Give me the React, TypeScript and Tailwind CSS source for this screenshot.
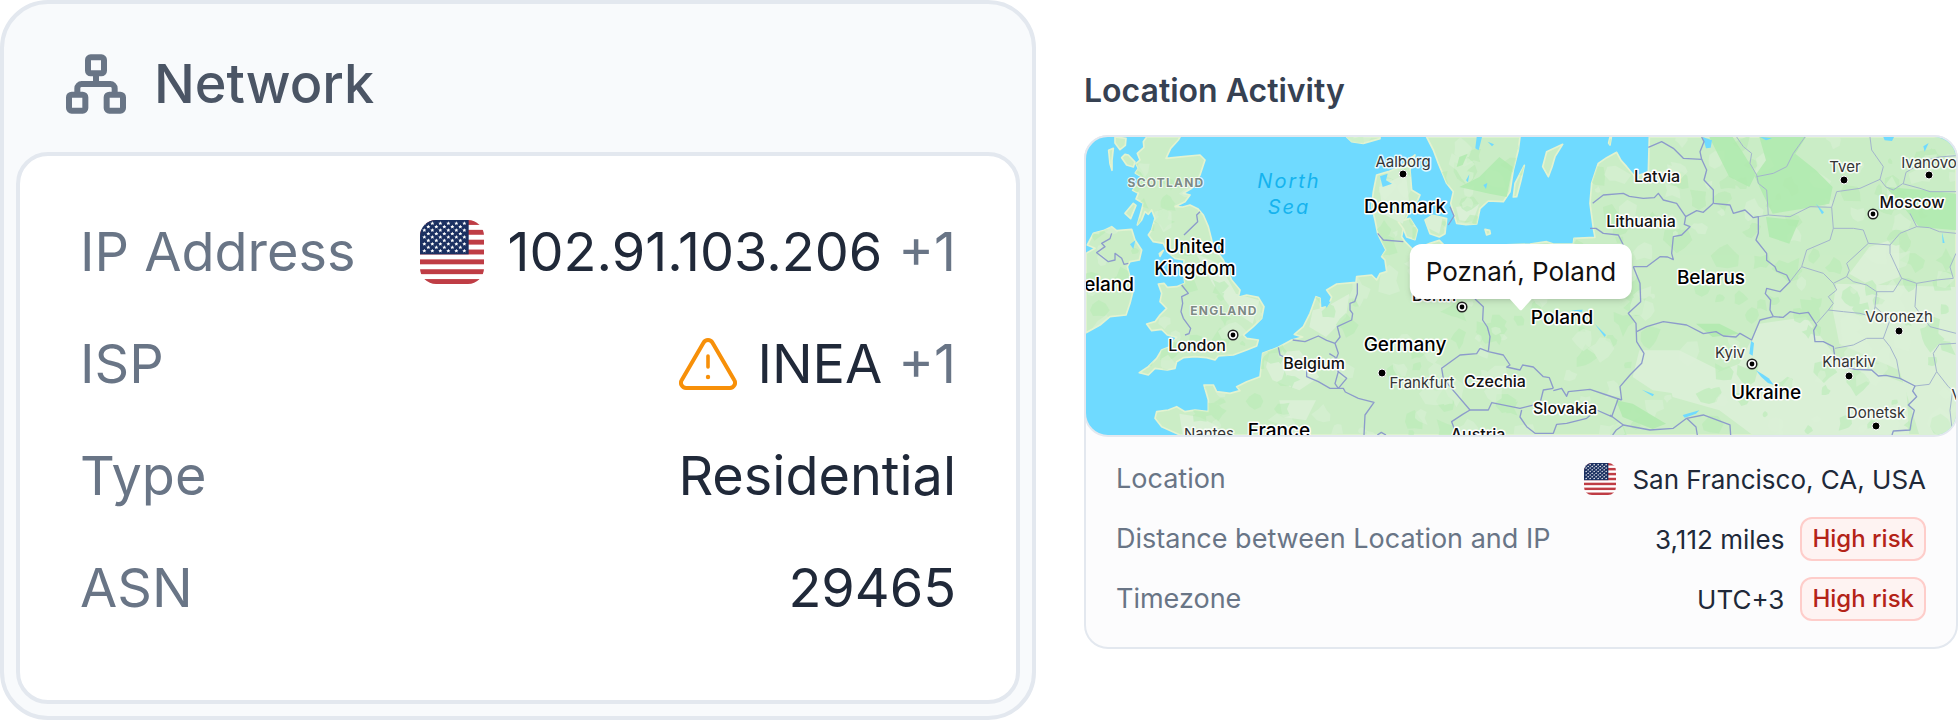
import type { ReactNode } from 'react';

interface RowProps {
  label: string;
  children: ReactNode;
}

interface MapLabel {
  text: string;
  x: number;
  y: number;
  kind: keyof typeof labelStyles;
}

const labelStyles = {
  country: 'fill-black text-[19px] font-medium stroke-white stroke-[3px]',
  small: 'fill-[#111] text-[16px] font-medium stroke-white stroke-[3px]',
  city: 'fill-[#333] text-[15px] stroke-white/80 stroke-[3px]',
  region: 'fill-[#7d8a85] text-[12px] font-bold tracking-widest stroke-white/80 stroke-[2px]',
  sea: 'fill-[#15b3ee] text-[20px] italic tracking-widest stroke-none',
};

const labels: MapLabel[] = [
  { text: 'SCOTLAND', x: 80, y: 50, kind: 'region' },
  { text: 'ENGLAND', x: 138, y: 178, kind: 'region' },
  { text: 'North', x: 203, y: 51, kind: 'sea' },
  { text: 'Sea', x: 203, y: 77, kind: 'sea' },
  { text: 'United', x: 109, y: 116, kind: 'country' },
  { text: 'Kingdom', x: 109, y: 138, kind: 'country' },
  { text: 'Ireland', x: 17, y: 154, kind: 'country' },
  { text: 'London', x: 111, y: 214, kind: 'small' },
  { text: 'Aalborg', x: 317, y: 30, kind: 'city' },
  { text: 'Denmark', x: 319, y: 76, kind: 'country' },
  { text: 'Germany', x: 319, y: 214, kind: 'country' },
  { text: 'Belgium', x: 228, y: 232, kind: 'small' },
  { text: 'Frankfurt', x: 336, y: 251, kind: 'city' },
  { text: 'Czechia', x: 409, y: 250, kind: 'small' },
  { text: 'Slovakia', x: 479, y: 277, kind: 'small' },
  { text: 'Poland', x: 476, y: 187, kind: 'country' },
  { text: 'Berlin', x: 348, y: 164, kind: 'small' },
  { text: 'France', x: 193, y: 300, kind: 'country' },
  { text: 'Nantes', x: 123, y: 302, kind: 'city' },
  { text: 'Austria', x: 392, y: 303, kind: 'small' },
  { text: 'Latvia', x: 571, y: 45, kind: 'small' },
  { text: 'Lithuania', x: 555, y: 90, kind: 'small' },
  { text: 'Belarus', x: 625, y: 147, kind: 'country' },
  { text: 'Kyiv', x: 644, y: 221, kind: 'city' },
  { text: 'Ukraine', x: 680, y: 262, kind: 'country' },
  { text: 'Tver', x: 759, y: 35, kind: 'city' },
  { text: 'Ivanovo', x: 843, y: 31, kind: 'city' },
  { text: 'Moscow', x: 826, y: 71, kind: 'small' },
  { text: 'Voronezh', x: 813, y: 185, kind: 'city' },
  { text: 'Kharkiv', x: 763, y: 230, kind: 'city' },
  { text: 'Donetsk', x: 790, y: 281, kind: 'city' },
  { text: 'Volgograd', x: 902, y: 263, kind: 'city' },
];

const cities = [[317, 37], [296, 236], [758, 43], [843, 38], [813, 194], [763, 239], [790, 289]];
const capitals = [[147, 198], [376, 170], [666, 227], [787, 77]];

// coastlines and borders are drawn on a grid three times as fine as the labels
const land = [
  // Great Britain
  '182,0 172,14 174,31 154,49 162,69 150,80 157,94 148,108 167,119 152,144 140,160 157,169 150,186 172,199 164,229 154,264 167,249 177,224 187,232 197,219 207,244 197,279 187,294 202,314 232,319 244,344 267,364 294,369 292,409 297,439 272,449 244,451 234,439 217,441 227,469 222,494 242,514 222,534 207,554 182,561 197,581 227,577 244,594 272,601 252,629 227,639 212,664 187,689 160,707 187,714 207,694 244,699 267,694 272,674 292,662 327,659 362,662 387,669 397,657 442,654 482,639 512,627 517,609 482,604 472,594 502,569 527,544 534,509 517,481 482,474 457,481 462,459 437,429 412,369 382,329 367,269 352,234 335,215 312,204 290,210 267,209 297,194 312,174 292,169 317,154 342,114 357,69 342,54 292,59 240,64 254,34 277,9 282,0',
  // Ireland
  '0,349 27,334 4,324 22,289 52,281 77,269 92,281 137,277 147,309 167,339 160,369 132,374 124,389 134,429 142,459 132,499 120,534 72,539 42,564 0,587',
  '87,0 120,4 118,25 102,38 87,18',
  '68,40 82,34 78,70 78,100 72,80',
  '107,62 117,52 127,54 147,75 142,90 122,84',
  '117,229 142,199 150,205 134,245',
  '220,350 232,340 222,358',
  // continental coast
  '282,894 227,869 207,844 212,824 247,819 272,809 297,824 327,819 367,824 367,789 354,744 382,744 392,764 432,769 462,761 452,749 482,734 522,719 530,649 577,631 617,609 650,600 625,592 652,569 672,529 690,479 702,484 704,514 727,507 737,480 722,459 752,441 810,436 812,419 857,414 872,429 882,410 902,404 897,369 887,359 900,339 887,314 875,289 867,249 857,209 862,164 872,114 907,104 942,89 987,54 972,99 977,159 1002,174 995,190 972,219 957,249 947,299 957,314 982,339 1032,319 1060,310 1080,330 1332,321 1382,314 1402,321 1462,321 1464,304 1527,301 1522,274 1512,199 1517,139 1537,79 1562,62 1592,46 1605,70 1622,89 1647,119 1687,104 1690,0 2610,0 2610,894',
  // Zealand, Funen, Bornholm
  '1017,249 1040,235 1082,245 1077,290 1060,300 1032,290',
  '937,254 972,244 994,279 987,308 962,300 952,275',
  '1197,277 1211,280 1213,290 1202,294',
  // Sweden and Norway
  '1022,0 1042,39 1057,79 1082,139 1102,164 1094,199 1112,259 1140,263 1172,261 1182,215 1207,192 1252,194 1272,164 1282,99 1297,39 1302,0',
  '782,0 797,14 832,19 882,5 882,0',
  '1382,44 1430,22 1407,59 1398,90 1387,119 1370,89',
  '1315,85 1287,139 1282,180 1292,179 1305,130',
  '1572,0 1576,0 1572,24 1568,18',
];

const water = [
  '882,118 905,110 900,130 918,140 890,150',
  '1172,0 1188,0 1178,40 1168,34',
  '1150,112 1146,136 1140,130',
  '1205,14 1224,22 1218,28',
  '1192,144 1204,138 1200,156',
  '132,322 148,310 142,336',
  '704,486 716,492 734,494 722,512',
  '1850,0 1878,10 1874,32 1860,34',
  '2022,0 2058,4 2040,10',
  '2392,0 2424,0 2418,12 2396,10',
  '2512,28 2528,18 2516,44',
  '2190,200 2214,226 2208,232',
  '1995,612 2004,618 2000,656 1990,650',
  '2010,700 2030,712 2048,724 2064,744 2046,738 2026,720',
  '2568,286 2576,318 2570,318',
  '1790,834 1840,820 1830,830 1796,842',
  '1668,758 1704,772 1700,778',
  '1526,560 1560,594 1556,600',
  '1455,520 1490,518 1488,526',
];

const forest = [
  '2020,0 2160,0 2128,50 2190,100 2240,150 2230,200 2150,215 2060,230 2030,170 2006,118 2040,70',
  '1870,0 1940,0 1966,40 2010,110 1990,150 1930,120 1900,60',
  '2400,150 2520,160 2610,170 2610,280 2500,270 2460,220',
  '1240,60 1280,90 1262,180 1210,170 1120,150 1180,120',
  '1120,60 1145,50 1130,84 1112,90',
  '1590,790 1640,800 1740,860 1700,876 1610,840',
  '1830,560 1900,560 1960,590 1880,600',
  '2040,240 2140,250 2110,320 2050,300',
];

const plains = [
  '2020,560 2160,540 2250,660 2460,740 2470,894 2000,894 1900,820 1760,780 1740,700 1860,720 1960,680',
  '2250,440 2610,450 2610,894 2500,894 2440,700 2260,620 2240,520',
  '2350,330 2440,300 2440,420 2360,450 2290,410',
  '1660,640 1780,640 1900,700 1840,780 1700,760 1640,720',
  '330,350 400,380 450,470 520,490 500,560 440,520 380,440',
  '550,650 640,640 700,720 640,760 560,730 540,690',
  '680,520 720,510 790,470 780,540 720,600 670,570',
  '880,150 960,110 970,200 950,260 890,230',
  '280,830 340,840 400,870 380,894 290,894',
  '580,790 690,790 660,850 590,840',
  '1020,210 1070,240 1060,290 1020,270',
  '1110,210 1180,200 1160,255 1120,250',
];

const borders = [
  '1687,31 1727,14 1762,34 1792,64 1847,67 1842,44 1854,14 1847,0',
  '1847,67 1862,99 1854,129 1882,159 1882,199',
  '1520,199 1552,174 1612,169 1630,178 1672,184 1705,182 1717,169 1732,189 1772,199 1799,239 1832,221 1852,226 1882,199',
  '1799,239 1795,262 1812,269 1787,294 1762,299 1757,349 1762,368 1745,360 1722,359 1682,389 1642,389',
  '1512,274 1530,274 1552,289 1597,294 1612,324',
  '1882,199 1932,204 1942,229 1977,219 2002,242 2017,239 2017,289 2010,309 2042,349 2042,370 2067,389 2072,402 2102,414 2112,434 2082,464 2042,454 2038,470 2054,489 2052,519 2062,539',
  '2062,539 2092,541 2112,524 2140,530 2167,526 2192,564 2183,580 2187,614 2212,614 2242,629 2247,664 2270,664 2282,690 2307,697 2357,699 2377,717 2400,715 2442,724 2487,747 2480,762 2492,779 2467,804 2485,820 2477,849 2472,879 2422,882 2418,894',
  '2062,539 2022,549 1997,609 1962,589 1950,600 1912,597 1890,584 1852,590 1802,564 1732,554 1682,569 1652,584',
  '1642,389 1662,439 1664,494 1627,529 1650,559 1652,614 1674,649 1667,679 1632,714 1602,749 1607,789',
  '1607,789 1562,774 1512,757 1447,764 1442,778 1427,754 1402,761',
  '1182,634 1207,644 1252,654 1272,684 1262,690 1302,699 1310,684 1342,690 1372,719 1390,722 1402,754',
  '1182,634 1172,650 1122,654 1067,694 1072,724 1092,749 1152,819 1207,819 1217,797 1302,814 1362,799 1372,759 1402,754',
  '1152,819 1130,832 1097,854 1112,894',
  '1307,819 1302,840 1322,869 1347,889 1402,889 1412,862 1442,859 1502,844 1532,819 1577,839 1597,784',
  '1572,834 1612,864 1692,879 1762,874 1802,844 1852,834 1900,852 1932,864 1934,894',
  '1612,864 1590,880 1580,894',
  '1802,844 1830,870 1834,894',
  '1167,486 1192,509 1190,549 1204,570 1212,599 1207,644',
  '814,439 814,470 806,494 792,499 792,519 800,530 797,549 754,569 762,600 747,619 757,649 745,680 757,704',
  '620,609 657,614 697,597 722,610 747,619',
  '577,631 582,654 622,674 662,689 662,719 697,734 732,754 772,754 778,765 817,784 864,796 837,834 834,894',
  '757,704 747,740 757,754 782,724 757,704 747,660 730,650',
  '875,289 892,309 952,314',
  '77,289 72,305 47,319 57,329 32,347 67,374 87,369 87,349 107,364 114,382 127,379',
  '342,224 332,234 335,254 294,294',
  '287,444 307,469 287,479 290,499 285,524 292,544 314,574 309,590 297,594',
  '1092,209 1104,237 1087,264',
  '874,894 886,886 900,894',
];

const provinces = [
  '1952,0 1972,29 1997,49 1992,79 2012,114 2017,139 2042,159 2047,234 2112,239 2172,209 2237,211 2242,274 2232,309 2162,339 2147,389 2112,434',
  '2012,119 2062,109 2102,89 2122,49 2157,0',
  '2017,239 2047,234',
  '2237,211 2252,164 2322,154 2382,127 2392,89 2357,39 2352,0',
  '2382,127 2400,150 2422,159 2450,140 2502,154 2532,164 2610,164',
  '2452,140 2460,106 2520,70 2560,60 2610,56',
  '2242,274 2302,274 2332,279 2347,319 2412,324 2442,289 2492,269 2472,229',
  '2492,269 2530,272 2560,284 2610,289',
  '2347,319 2282,379 2290,400 2282,419 2242,439 2212,409 2147,389',
  '2282,419 2302,434 2342,444 2372,464 2422,464 2447,424 2412,349 2412,324',
  '2447,424 2492,439 2552,429 2602,424 2592,390 2610,349',
  '2372,464 2367,509 2412,549 2392,604 2342,604 2302,624 2247,634',
  '2242,439 2252,459 2227,479 2242,499 2227,519 2192,559',
  '2227,519 2272,524 2322,529 2362,540 2367,509',
  '2492,439 2487,509 2532,569 2610,589',
  '2392,604 2412,629 2432,669 2442,724',
  '2487,747 2530,742 2552,704 2542,649 2560,622 2610,619',
  '2552,704 2587,749 2600,760 2592,820 2600,894',
];

// small terrain patches scattered with a fixed seed
function scatter(count: number, start: number) {
  let seed = start;
  const next = () => {
    seed = (seed * 16807) % 2147483647;
    return seed / 2147483647;
  };
  return Array.from({ length: count }, () => {
    const cx = next() * 2610;
    const cy = next() * 894;
    const size = 10 + next() * 34;
    return Array.from({ length: 8 }, (_, i) => {
      const angle = (i * Math.PI) / 4;
      const r = size * (0.4 + next() * 0.8);
      return `${Math.round(cx + r * Math.cos(angle))},${Math.round(cy + r * Math.sin(angle))}`;
    }).join(' ');
  });
}

const darkPatches = scatter(230, 4711);
const lightPatches = scatter(200, 977);

const star = '0,-6 2,-2 6,-2 3,1 4,5 0,3 -4,5 -3,1 -6,-2 -2,-2';

function UsFlag({ className }: { className: string }) {
  return (
    <svg viewBox="0 0 192 192" className={className} role="img" aria-label="United States">
      <rect width="192" height="192" fill="#fff" />
      {[0, 2, 4, 6, 8, 10, 12].map((i) => (
        <rect key={i} y={(i * 192) / 13} width="192" height={192 / 13} fill="#bf3d45" />
      ))}
      <rect width="146" height="103" fill="#1b3061" />
      {Array.from({ length: 9 }, (_, row) =>
        Array.from({ length: row % 2 ? 5 : 6 }, (_, col) => (
          <polygon
            key={`${row}-${col}`}
            points={star}
            transform={`translate(${(row % 2 ? 25 : 13) + col * 24} ${10 + row * 10.3})`}
            fill="#fff"
          />
        )),
      )}
    </svg>
  );
}

function NetworkIcon() {
  return (
    <svg viewBox="0 0 180 180" className="size-[60px] shrink-0" fill="none" stroke="#697586" strokeWidth="18" aria-hidden="true">
      <rect x="66" y="10" width="48" height="48" rx="8" />
      <rect x="9" y="122" width="49" height="48" rx="8" />
      <rect x="122" y="122" width="49" height="48" rx="8" />
      <path d="M90 62v28M34 118v-15a13 13 0 0 1 13-13h86a13 13 0 0 1 13 13v15" />
    </svg>
  );
}

function WarningIcon() {
  return (
    <svg viewBox="0 0 58 52" className="mr-1 h-[52px] w-[58px] shrink-0" fill="none" stroke="#f79009" strokeWidth="4" strokeLinecap="round" strokeLinejoin="round" role="img" aria-label="Warning">
      <path d="M24.5 4.7a5.2 5.2 0 0 1 9 0L55.2 42a5.2 5.2 0 0 1-4.5 8H7.3a5.2 5.2 0 0 1-4.5-8Z" />
      <path d="M29 18v11" strokeWidth="3.6" />
      <circle cx="29" cy="39" r="2.2" fill="#f79009" stroke="none" />
    </svg>
  );
}

function NetworkRow({ label, children }: RowProps) {
  return (
    <div className="flex h-28 items-center justify-between gap-6">
      <dt className="whitespace-nowrap text-[#697586]">{label}</dt>
      <dd className="flex items-center gap-4 whitespace-nowrap text-[#202939]">{children}</dd>
    </div>
  );
}

function LocationRow({ label, children }: RowProps) {
  return (
    <div className="flex h-15 items-center justify-between gap-6">
      <dt className="whitespace-nowrap text-[27px] text-[#697586]">{label}</dt>
      <dd className="flex items-center gap-4 whitespace-nowrap text-[26px] text-[#202939]">{children}</dd>
    </div>
  );
}

function RiskBadge() {
  return (
    <span className="flex h-11 items-center rounded-xl border-2 border-[#fecdca] bg-[#fef3f2] px-2.5 text-2xl font-medium text-[#b42318]">
      High risk
    </span>
  );
}

function ActivityMap() {
  return (
    <div className="relative -m-0.5 h-[302px] overflow-hidden rounded-3xl border-2 border-[#e3e8ef] bg-[#6fdaff]">
      <svg viewBox="0 0 870 298" preserveAspectRatio="xMidYMid slice" className="size-full" role="img" aria-label="Map of Europe">
        <g transform="scale(.33333)" strokeLinejoin="round">
          <clipPath id="land">
            {land.map((points) => (
              <polygon key={points} points={points} />
            ))}
          </clipPath>
          <g fill="#cbedc6" stroke="#e3f3d0" strokeWidth="5">
            {land.map((points) => (
              <polygon key={points} points={points} />
            ))}
          </g>
          <g clipPath="url(#land)">
            <g fill="#daf0d6">
              {plains.map((points) => (
                <polygon key={points} points={points} />
              ))}
            </g>
            <g fill="#b9ecb6" opacity=".6">
              {darkPatches.map((points) => (
                <polygon key={points} points={points} />
              ))}
            </g>
            <g fill="#dcf1d8" opacity=".5">
              {lightPatches.map((points) => (
                <polygon key={points} points={points} />
              ))}
            </g>
            <g fill="#b0eaae" opacity=".85">
              {forest.map((points) => (
                <polygon key={points} points={points} />
              ))}
            </g>
          </g>
          <g fill="#6fdaff">
            {water.map((points) => (
              <polygon key={points} points={points} />
            ))}
          </g>
          <g fill="none" stroke="#a3b4cc" strokeWidth="3">
            {provinces.map((points) => (
              <polyline key={points} points={points} />
            ))}
          </g>
          <g fill="none" stroke="#8c9bcb" strokeWidth="4">
            {borders.map((points) => (
              <polyline key={points} points={points} />
            ))}
          </g>
        </g>
        {cities.map(([x, y]) => (
          <circle key={`${x}-${y}`} cx={x} cy={y} r="4" fill="#000" stroke="#fff" strokeWidth="1" />
        ))}
        {capitals.map(([x, y]) => (
          <g key={`${x}-${y}`}>
            <circle cx={x} cy={y} r="4.8" fill="#fff" stroke="#222" strokeWidth="1.5" />
            <circle cx={x} cy={y} r="2.4" fill="#000" />
          </g>
        ))}
        <g textAnchor="middle" strokeLinejoin="round" className="[paint-order:stroke]">
          {labels.map(({ text, x, y, kind }) => (
            <text key={text} x={x} y={y} className={labelStyles[kind]}>
              {text}
            </text>
          ))}
        </g>
      </svg>

      <div className="absolute left-1/2 top-[107px] -translate-x-1/2 whitespace-nowrap rounded-xl bg-white px-4 text-[26px] leading-[55px] text-[#111] shadow-md">
        Poznań, Poland
        <svg viewBox="0 0 22 12" className="absolute left-1/2 top-full h-3 w-[22px] -translate-x-1/2" aria-hidden="true">
          <path d="M0 0h22L12.5 10.5a2 2 0 0 1-3 0Z" fill="#fff" />
        </svg>
      </div>
    </div>
  );
}

export default function App() {
  return (
    <main className="grid min-h-screen grid-cols-[1036fr_874fr] items-start gap-12 bg-white font-['Inter',sans-serif]">
      <section className="rounded-[48px] border-4 border-[#e3e8ef] bg-[#f8fafc] px-3 pb-3">
        <header className="flex h-[148px] items-center gap-7 pt-3 pl-[50px]">
          <NetworkIcon />
          <h2 className="text-[54px] leading-none font-medium text-[#4b5565]">Network</h2>
        </header>
        <dl className="rounded-[32px] border-4 border-[#e3e8ef] bg-white px-[60px] pt-10 pb-14 text-[54px] leading-none">
          <NetworkRow label="IP Address">
            <UsFlag className="mr-2 size-16 shrink-0 rounded-2xl" />
            <span>102.91.103.206</span>
            <span className="text-[#697586]">+1</span>
          </NetworkRow>
          <NetworkRow label="ISP">
            <WarningIcon />
            <span>INEA</span>
            <span className="text-[#697586]">+1</span>
          </NetworkRow>
          <NetworkRow label="Type">Residential</NetworkRow>
          <NetworkRow label="ASN">29465</NetworkRow>
        </dl>
      </section>

      <section className="pt-[71px]">
        <h2 className="mb-6 text-[32px] leading-10 font-semibold text-[#364152]">Location Activity</h2>
        <div className="rounded-3xl border-2 border-[#e3e8ef] bg-[#fcfcfd]">
          <ActivityMap />
          <dl className="px-[30px] pt-[14px] pb-[18px]">
            <LocationRow label="Location">
              <UsFlag className="size-8 shrink-0 rounded-lg" />
              <span>San Francisco, CA, USA</span>
            </LocationRow>
            <LocationRow label="Distance between Location and IP">
              <span>3,112 miles</span>
              <RiskBadge />
            </LocationRow>
            <LocationRow label="Timezone">
              <span>UTC+3</span>
              <RiskBadge />
            </LocationRow>
          </dl>
        </div>
      </section>
    </main>
  );
}
